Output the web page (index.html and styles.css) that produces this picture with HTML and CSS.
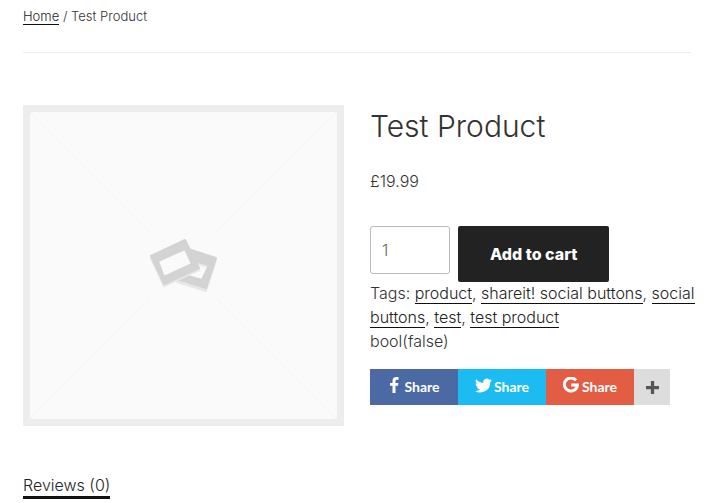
FILE: index.html
```html
<!DOCTYPE html>
<html lang="en">
<head>
<meta charset="utf-8">
<meta name="viewport" content="width=device-width, initial-scale=1">
<title>Test Product</title>
<link rel="stylesheet" href="styles.css">
</head>
<body>
<nav class="breadcrumb" aria-label="Breadcrumb"><a class="link" href="#">Home</a> / Test Product</nav>
<main class="product">
  <svg class="placeholder" viewBox="0 0 321 321" role="img" aria-label="Product image placeholder">
    <path fill="#ededed" d="M0 0h321v321H0z"/>
    <rect x="7" y="7" width="307" height="307" rx="2" fill="#fafafa"/>
    <path d="M8 8l119 119M313 8L194 127M8 313l119-119M313 313L194 194" stroke="#f3f3f3" fill="none"/>
    <g fill-rule="evenodd" stroke-linejoin="round" stroke-width="2">
      <path fill="#e7e7e7" stroke="#e7e7e7" d="M165 146L193 155L183 186L154 177ZM169 157L186 162L179 175L165 173Z"/>
      <path fill="#d3d3d3" stroke="#d3d3d3" d="M165 144L193 153L183 183L154 174ZM169 155L186 160L179 175L165 171Z"/>
      <path fill="#e7e7e7" stroke="#e7e7e7" d="M128 153L162 137L176 165L141 181ZM135 158L162 147L169 160L141 170Z"/>
      <path fill="#fafafa" d="M135 156L162 145L169 159L141 171Z"/>
      <path fill="#d3d3d3" stroke="#d3d3d3" d="M128 151L162 135L176 163L141 179ZM135 156L162 144L169 159L141 172Z"/>
    </g>
  </svg>
  <section class="summary">
    <h1 class="title">Test Product</h1>
    <p class="price">£19.99</p>
    <form class="cart">
      <input class="quantity" type="text" inputmode="numeric" value="1" aria-label="Quantity">
      <button class="add" type="button">Add to cart</button>
    </form>
    <div class="meta">Tags: <a class="link" href="#">product</a>, <a class="link" href="#">shareit! social buttons</a>, <a class="link" href="#">social buttons</a>, <a class="link" href="#">test</a>, <a class="link" href="#">test product</a></div>
    <div class="meta">bool(false)</div>
    <div class="shares">
      <a class="share facebook" href="#"><svg width="14" height="16" viewBox="0 0 14 16" aria-hidden="true"><path fill="#fff" d="M10.500.1v2.600H9C7.800 2.700 7.500 3.300 7.500 4.100V6h2.900L10 8.800H7.500V16h-3V8.800H2V6h2.500V3.800C4.500 1.300 6 0 8.300 0z"/></svg>Share</a>
      <a class="share twitter" href="#"><svg width="17" height="17" viewBox="0 0 24 24" aria-hidden="true"><path fill="#fff" d="M24 4.600a10 10 0 0 1-2.800.8 5 5 0 0 0 2.100-2.700 10 10 0 0 1-3.100 1.200A4.900 4.900 0 0 0 11.800 8.400 14 14 0 0 1 1.700 3.200a4.900 4.900 0 0 0 1.500 6.600A5 5 0 0 1 1 9.200a4.900 4.900 0 0 0 3.900 4.900 5 5 0 0 1-2.200.1 4.900 4.900 0 0 0 4.600 3.400A10 10 0 0 1 0 19.600 14 14 0 0 0 21.500 7.100 10 10 0 0 0 24 4.600z"/></svg>Share</a>
      <a class="share google" href="#"><svg width="17" height="16" viewBox="0 0 17 16" aria-hidden="true"><path fill="none" stroke="#fff" stroke-width="3" d="M13 3.400A6.500 6.500 0 1 0 14.400 8H8.200"/></svg>Share</a>
      <button class="more" type="button" aria-label="More sharing options"><svg width="13" height="13" viewBox="0 0 12 12" aria-hidden="true"><path d="M6 0v12M0 6h12" stroke="#555" stroke-width="3"/></svg></button>
    </div>
  </section>
</main>
<nav class="tabs" aria-label="Product information"><a class="tab" href="#">Reviews (0)</a></nav>
</body>
</html>
```
FILE: styles.css
```css
* { box-sizing: border-box; }
body {
  margin: 0;
  padding: 8px 32px 0 23px;
  background: #fff;
  color: #333;
  font: 300 16px/24px Inter, "Liberation Sans", sans-serif;
}
.link {
  color: #222;
  text-decoration: none;
  box-shadow: 0 1px 0 #0f0f0f;
}
.breadcrumb {
  padding-bottom: 28px;
  border-bottom: 1px solid #eee;
  font-size: 13px;
  line-height: 16px;
}
.product {
  display: grid;
  grid-template-columns: 1fr 1fr;
  gap: 26px;
  margin-top: 52px;
}
.placeholder { display: block; width: 100%; }
.title {
  margin: 0;
  font-size: 30px;
  font-weight: 300;
  line-height: 42px;
}
.price { margin: 22px 0 33px; }
.cart {
  display: flex;
  align-items: flex-start;
  gap: 8px;
  margin-bottom: -1px;
}
.quantity {
  width: 80px;
  height: 48px;
  padding: 0 11px;
  border: 1px solid #bbb;
  border-radius: 3px;
  color: #666;
  background: #fff;
  font: inherit;
}
.add {
  padding: 16px 32px;
  border: 0;
  border-radius: 2px;
  background: #222;
  color: #fff;
  font: 800 16px/24px Inter, "Liberation Sans", sans-serif;
}
.meta { margin-right: -8px; }
.shares {
  display: flex;
  margin-top: 16px;
}
.share {
  display: flex;
  align-items: center;
  justify-content: center;
  gap: 2px;
  width: 88px;
  height: 36px;
  color: #fff;
  font: 700 14px/16px Lato, "Liberation Sans", sans-serif;
  text-decoration: none;
}
.share svg { margin-bottom: 4px; }
.facebook { background: #4b69a3; }
.twitter { background: #1cbcf2; }
.google { background: #e35d45; }
.more {
  display: grid;
  place-items: center;
  width: 36px;
  padding: 0;
  border: 0;
  background: #ddd;
}
.tabs { margin-top: 47px; }
.tab {
  display: inline-block;
  border-bottom: 3px solid #111;
  color: #222;
  line-height: 22px;
  text-decoration: none;
}
```
